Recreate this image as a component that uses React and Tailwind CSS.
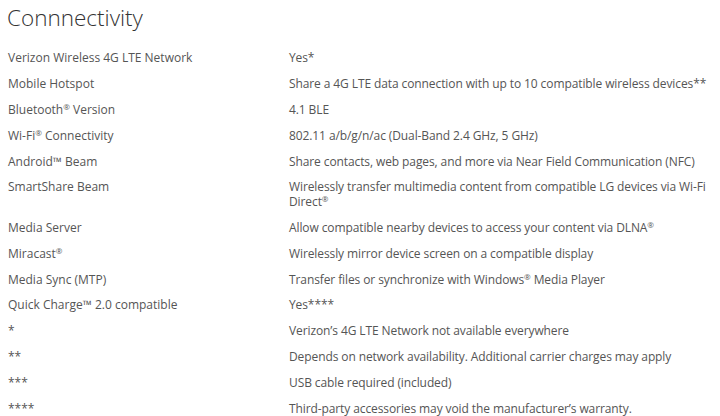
import React from 'react';

const R = () => <sup className="text-[8px]">®</sup>;

const specs = [
  ['Verizon Wireless 4G LTE Network', 'Yes*'],
  ['Mobile Hotspot', 'Share a 4G LTE data connection with up to 10 compatible wireless devices**'],
  [<>Bluetooth<R /> Version</>, '4.1 BLE'],
  [<>Wi-Fi<R /> Connectivity</>, '802.11 a/b/g/n/ac (Dual-Band 2.4 GHz, 5 GHz)'],
  ['Android™ Beam', 'Share contacts, web pages, and more via Near Field Communication (NFC)'],
  ['SmartShare Beam', <>Wirelessly transfer multimedia content from compatible LG devices via Wi-Fi Direct<R /></>],
  ['Media Server', <>Allow compatible nearby devices to access your content via DLNA<R /></>],
  [<>Miracast<R /></>, 'Wirelessly mirror device screen on a compatible display'],
  ['Media Sync (MTP)', <>Transfer files or synchronize with Windows<R /> Media Player</>],
  ['Quick Charge™ 2.0 compatible', 'Yes****'],
  ['*', 'Verizon’s 4G LTE Network not available everywhere'],
  ['**', 'Depends on network availability. Additional carrier charges may apply'],
  ['***', 'USB cable required (included)'],
  ['****', 'Third-party accessories may void the manufacturer’s warranty.'],
];

export default function App() {
  return (
    <div className="w-[720px] h-[416px] overflow-hidden bg-white text-[#555] font-['Open_Sans',sans-serif]">
      <h2 className="pl-[7px] pt-[2px] text-[22.5px] leading-[32px] font-light text-[#333]">Connnectivity</h2>
      <div className="mt-[11px]">
        {specs.map(([label, value], i) => (
          <div key={i} className="flex py-[5.4px] text-[12px] leading-[15px]">
            <div className="w-[289px] shrink-0 pl-[8px]">{label}</div>
            <div className="w-[430px] tracking-[-0.1px]">{value}</div>
          </div>
        ))}
      </div>
    </div>
  );
}
